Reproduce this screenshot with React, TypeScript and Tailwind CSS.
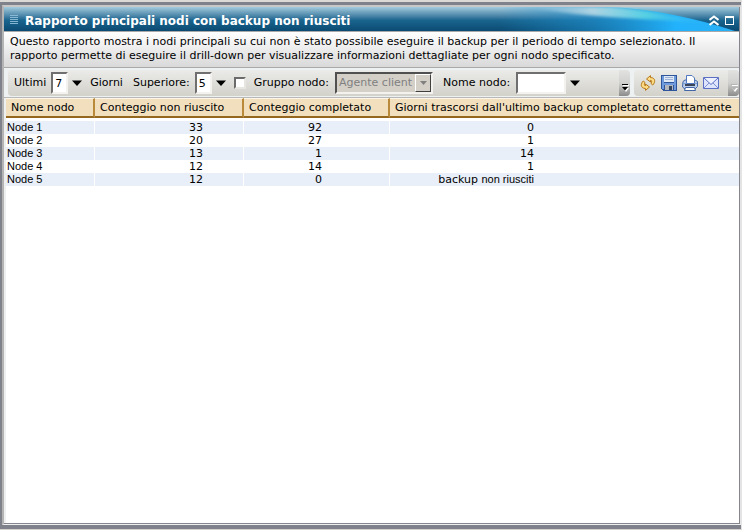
import { useState } from 'react'

const font = "font-['Verdana','DejaVu_Sans',sans-serif]"

const rows = [
  { name: 'Node 1', failed: 33, completed: 92, days: '0' },
  { name: 'Node 2', failed: 20, completed: 27, days: '1' },
  { name: 'Node 3', failed: 13, completed: 1, days: '14' },
  { name: 'Node 4', failed: 12, completed: 14, days: '1' },
  { name: 'Node 5', failed: 12, completed: 0, days: '' },
]

const columns = [
  { title: 'Nome nodo', width: 'w-[89px]' },
  { title: 'Conteggio non riuscito', width: 'w-[149px]' },
  { title: 'Conteggio completato', width: 'w-[146px]' },
  { title: "Giorni trascorsi dall'ultimo backup completato correttamente", width: '' },
]

const inset =
  'h-[22px] border-2 border-t-[#6f6f6f] border-l-[#6f6f6f] border-r-[#f4f2ee] border-b-[#f4f2ee] bg-white outline-none'

function Arrow() {
  return (
    <svg width="10" height="6" viewBox="0 0 10 6">
      <path d="M0 .5h10L5 6z" fill="#000" />
    </svg>
  )
}

function Grip({ dim }: { dim?: boolean }) {
  return (
    <div className="flex h-full w-[11px] items-end justify-center rounded-r bg-linear-to-b from-[#e2e2e0] via-[#d0d0ce] to-[#8c8c8c] pb-1">
      <svg width="8" height="8" viewBox="0 0 8 8">
        <path d="M2 1h6v1H2zM2 4h6L5 8z" fill="#fff" />
        <path d="M1 0h6v1H1zM1 3h6L4 6.500z" fill={dim ? '#b5b5b5' : '#000'} />
      </svg>
    </div>
  )
}

function RefreshIcon() {
  return (
    <svg width="16" height="16" viewBox="0 0 16 16">
      <g fill="#fcdc84" stroke="#b5771b" strokeLinejoin="round">
        <path d="M10.500.6L6.500 4l4 3V5.300c1.400 0 1.500 1.200.5 3.200l1.700 1.500C15.500 7.500 15.800 2.700 10.500 2.500z" />
        <path d="M5.500 15.400l4-3.400-4-3v1.700c-1.400 0-1.500-1.200-.5-3.200L3.300 6C.5 8.500.2 13.300 5.500 13.500z" />
      </g>
    </svg>
  )
}

function SaveIcon() {
  return (
    <svg width="16" height="16" viewBox="0 0 16 16" shapeRendering="crispEdges">
      <path d="M0 0h16v16H2l-2-2z" fill="#2f569b" />
      <path d="M1 1h2v13H1zM13 1h2v14h-2zM3 8h10v2H3z" fill="#6f9bdc" />
      <path d="M3 1h10v6H3z" fill="#dfe8f5" />
      <path d="M4 2h8v1H4zM4 4h8v1H4z" fill="#9db4d8" />
      <path d="M4 10h8v5H4z" fill="#b4b8be" />
      <path d="M8 11h3v4H8z" fill="#33455f" />
    </svg>
  )
}

function PrintIcon() {
  return (
    <svg width="16" height="16" viewBox="0 0 16 16">
      <path d="M1 6.500L3 5h10l2.500 1.500v5L13 14H3L.5 12z" fill="#b9cdec" stroke="#4467a8" />
      <path d="M4.500.5H10L12.500 3v5.500h-8z" fill="#fff" stroke="#4f78c0" />
      <path d="M1 8.500h3.500M12.500 8.500H15" stroke="#7f9fd4" />
      <path d="M3 10h10" stroke="#3b4659" strokeWidth="2" />
      <path d="M3.500 12.500h9l1 3h-11z" fill="#fff" stroke="#4467a8" />
    </svg>
  )
}

function MailIcon() {
  return (
    <svg width="16" height="12" viewBox="0 0 16 12">
      <path d="M.5.5h15v11H.5z" fill="#dde4fb" stroke="#5b6fc4" />
      <path d="M1 11l5-5M15 11l-5-5" stroke="#7f90d4" fill="none" />
      <path d="M1 1l7 6.500L15 1" stroke="#5b6fc4" fill="#eef2ff" />
    </svg>
  )
}

function TitleBar() {
  return (
    <header className="relative flex h-6 items-center overflow-hidden bg-linear-to-b from-[#a3cbdd] via-[#19658f] via-55% to-[#0b4a72] pr-1 pl-0.5">
      <svg className="absolute top-0 right-0" width="240" height="24" viewBox="0 0 240 24">
        <defs>
          <linearGradient id="wave" x1="0" x2="1" y1="0" y2="0">
            <stop offset="0" stopColor="#1e96d8" stopOpacity="0" />
            <stop offset="0.400" stopColor="#1e96d8" stopOpacity="0.550" />
            <stop offset="0.750" stopColor="#22b2fc" />
            <stop offset="1" stopColor="#2ab0f5" />
          </linearGradient>
          <linearGradient id="crest" x1="0" x2="1" y1="0" y2="0">
            <stop offset="0" stopColor="#c8dde6" stopOpacity="0" />
            <stop offset="0.350" stopColor="#c0dde6" stopOpacity="0.850" />
            <stop offset="0.650" stopColor="#58d4e4" stopOpacity="0.900" />
            <stop offset="1" stopColor="#38c0f4" stopOpacity="0" />
          </linearGradient>
          <filter id="soft" x="-10%" y="-20%" width="120%" height="150%">
            <feGaussianBlur stdDeviation="1.500" />
          </filter>
        </defs>
        <path d="M0 0H110C155 2 195 11 236 24H0z" fill="url(#wave)" />
        <path d="M30 0H110C145 2 180 9 212 17C160 11 90 12 30 0z" fill="url(#crest)" filter="url(#soft)" />
      </svg>
      <svg className="ml-1" width="8" height="9" viewBox="0 0 8 9" shapeRendering="crispEdges">
        <path d="M0 .5h8M0 2.500h8M0 4.500h8M0 6.500h8M0 8.500h8" stroke="#8fbfd8" strokeOpacity="0.900" />
      </svg>
      <h1 className="relative ml-[7px] pt-1 text-[12px] leading-5 font-bold whitespace-nowrap text-white">
        Rapporto principali nodi con backup non riusciti
      </h1>
      <div className="relative ml-auto flex items-center gap-1 pt-0.5">
        <button type="button" aria-label="Comprimi" className="p-px">
          <svg width="10" height="11" viewBox="0 0 10 11">
            <path d="M.5 5L5 1.500 9.500 5M.5 10L5 6.500 9.500 10" fill="none" stroke="#fff" strokeWidth="2" />
          </svg>
        </button>
        <button type="button" aria-label="Ingrandisci" className="p-px">
          <svg width="9" height="9" viewBox="0 0 9 9" shapeRendering="crispEdges">
            <path d="M.5 .5h8v8h-8z" fill="none" stroke="#fff" />
            <path d="M0 0h9v2H0z" fill="#fff" />
          </svg>
        </button>
      </div>
    </header>
  )
}

function Toolbar() {
  const [days, setDays] = useState('7')
  const [top, setTop] = useState('5')
  const [node, setNode] = useState('')

  return (
    <div className="flex h-[30px] gap-1 border-b border-[#b8b8b8] bg-[#eef1f1] pt-0.5 pb-px pl-1">
      <div className="flex min-w-0 flex-1 items-center rounded bg-linear-to-b from-[#ebebe9] to-[#d2d1ca] pl-1.5 whitespace-nowrap">
        <label htmlFor="days">Ultimi</label>
        <input
          id="days"
          className={`ml-[5px] w-[17px] pl-0.5 ${inset}`}
          value={days}
          onChange={(e) => setDays(e.target.value)}
        />
        <button type="button" aria-label="Scegli giorni" className="ml-1">
          <Arrow />
        </button>
        <span className="ml-2">Giorni</span>
        <label htmlFor="top" className="ml-[10px]">
          Superiore:
        </label>
        <input
          id="top"
          className={`ml-[5px] w-[17px] pl-0.5 ${inset}`}
          value={top}
          onChange={(e) => setTop(e.target.value)}
        />
        <button type="button" aria-label="Scegli superiore" className="ml-1">
          <Arrow />
        </button>
        <input
          id="use-group"
          type="checkbox"
          aria-label="Filtra per gruppo nodo"
          className="ml-2 size-3 appearance-none border-2 border-t-[#6b6b6b] border-r-[#e8e6e0] border-b-[#e8e6e0] border-l-[#6b6b6b] bg-white checked:bg-[#19658f]"
        />
        <label htmlFor="group" className="ml-2">
          Gruppo nodo:
        </label>
        <div className="relative ml-1.5">
          <select
            id="group"
            disabled
            className="block h-[22px] w-[98px] appearance-none border-2 border-t-[#505050] border-r-[#f4f2ee] border-b-[#f4f2ee] border-l-[#505050] bg-[#d4d0c8] pl-0.5 text-[#808080] opacity-100"
          >
            <option>Agente client</option>
          </select>
          <div className="pointer-events-none absolute top-0.5 right-0.5 bottom-0.5 flex w-4 items-center justify-center border border-t-white border-r-[#404040] border-b-[#404040] border-l-white bg-[#d4d0c8]">
            <svg width="7" height="4" viewBox="0 0 7 4">
              <path d="M0 0h7L3.500 4z" fill="#808080" />
            </svg>
          </div>
        </div>
        <label htmlFor="node" className="ml-[10px]">
          Nome nodo:
        </label>
        <input
          id="node"
          className={`ml-1.5 w-[50px] pl-0.5 ${inset}`}
          value={node}
          onChange={(e) => setNode(e.target.value)}
        />
        <button type="button" aria-label="Scegli nodo" className="ml-1">
          <Arrow />
        </button>
        <div className="ml-auto h-full">
          <Grip />
        </div>
      </div>
      <div className="flex items-center gap-[5px] rounded bg-linear-to-b from-[#ebebe9] to-[#d2d1ca] pl-1.5">
        <button type="button" aria-label="Aggiorna">
          <RefreshIcon />
        </button>
        <button type="button" aria-label="Salva">
          <SaveIcon />
        </button>
        <button type="button" aria-label="Stampa">
          <PrintIcon />
        </button>
        <button type="button" aria-label="Invia" className="mr-1">
          <MailIcon />
        </button>
        <Grip dim />
      </div>
    </div>
  )
}

function ReportTable() {
  return (
    <table className="w-full table-fixed border-separate border-spacing-0">
      <thead>
        <tr>
          {columns.map((col) => (
            <th
              key={col.title}
              className={`h-5 border-t border-r-2 border-b-2 border-t-[#fdf6e8] border-r-[#b98a3a] border-b-[#94691f] bg-[#f1dfbe] pl-[5px] text-left font-normal whitespace-nowrap last:border-r-0 ${col.width}`}
            >
              {col.title}
            </th>
          ))}
        </tr>
      </thead>
      <tbody className="before:block before:h-[3px]">
        {rows.map((row) => (
          <tr key={row.name} className="h-[13px] leading-[13px] odd:bg-[#e9eff8]">
            <td className="border-r border-white pl-px font-['Liberation_Sans',sans-serif] text-[11px] leading-[13px]">
              {row.name}
            </td>
            <td className="border-r border-white pr-10 text-right">{row.failed}</td>
            <td className="border-r border-white pr-[67px] text-right">{row.completed}</td>
            <td className="pr-[205px] text-right whitespace-nowrap">
              {row.days || (
                <>
                  backup <span className="font-['Liberation_Sans',sans-serif]">non riusciti</span>
                </>
              )}
            </td>
          </tr>
        ))}
      </tbody>
    </table>
  )
}

export default function App() {
  return (
    <div
      className={`flex min-h-screen flex-col border-t-2 border-r border-b border-t-[#dcdad7] border-r-[#e4e4e4] border-b-[#d6d2ce] bg-[#7f828a] pt-[3px] pb-1 text-[11px] leading-[14px] text-black ${font}`}
    >
      <div className="ml-0.5 flex flex-1 flex-col border-t-2 border-r border-b border-l-2 border-t-[#c8c8c8] border-r-[#e4e4e4] border-b-[#f0f0f0] border-l-[#b4b4b4]">
        <div className="flex flex-1 flex-col border-r border-b border-[#85868e] bg-white">
          <TitleBar />
          <p className="border-t border-b border-t-[#a9a9a9] border-b-[#a9a9a9] bg-linear-to-b from-white to-[#d9d9d9] px-1.5 pt-[3px] pb-1">
            Questo rapporto mostra i nodi principali su cui non è stato possibile eseguire il backup per il periodo
            di tempo selezionato. Il rapporto permette di eseguire il drill-down per visualizzare informazioni
            dettagliate per ogni nodo specificato.
          </p>
          <Toolbar />
          <main className="flex-1 border-l-2 border-[#edf0ef]">
            <ReportTable />
          </main>
        </div>
      </div>
    </div>
  )
}
